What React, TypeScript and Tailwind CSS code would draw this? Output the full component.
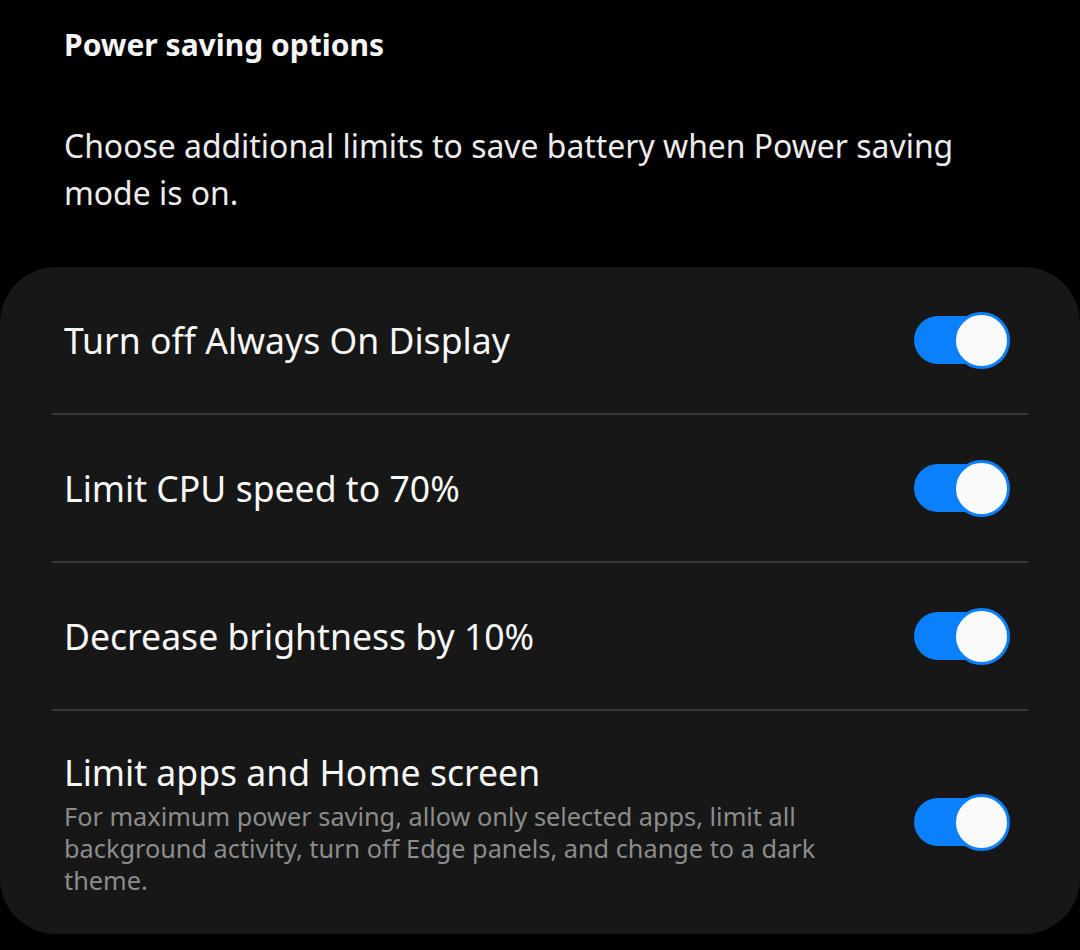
import React from "react";

type Option = { title: string; detail?: string };

const options: Option[] = [
  { title: "Turn off Always On Display" },
  { title: "Limit CPU speed to 70%" },
  { title: "Decrease brightness by 10%" },
  {
    title: "Limit apps and Home screen",
    detail:
      "For maximum power saving, allow only selected apps, limit all background activity, turn off Edge panels, and change to a dark theme.",
  },
];

function Toggle() {
  return (
    <div className="relative h-[57px] w-[96px] shrink-0">
      <div className="absolute left-0 top-[4px] h-[48px] w-[80px] rounded-full bg-[#0b80fc]" />
      <div className="absolute right-0 top-0 h-[57px] w-[57px] rounded-full border-[3px] border-[#0b80fc] bg-[#fafafa]" />
    </div>
  );
}

export default function App() {
  return (
    <div
      className="h-[950px] w-[1080px] overflow-hidden bg-black text-white"
      style={{ fontFamily: '"Noto Sans", "Open Sans", sans-serif' }}
    >
      <div className="px-[64px] pt-[25px]">
        <h1 className="text-[30px] font-bold leading-[40px] text-[#f5f5f5]">
          Power saving options
        </h1>
        <p className="mt-[57px] text-[31.9px] leading-[47px] text-[#ececec]">
          Choose additional limits to save battery when Power saving mode is on.
        </p>
      </div>

      <div className="mt-[51px] rounded-[56px] bg-[#171717] pb-[38px]">
        {options.map((o, i) => (
          <div key={o.title}>
            {i > 0 && <div className="mx-[52px] h-[2px] bg-[#383838]" />}
            <div
              className={
                o.detail
                  ? "flex items-center justify-between pl-[64px] pr-[70px] pt-[38px]"
                  : "flex h-[146px] items-center justify-between pl-[64px] pr-[70px]"
              }
            >
              <div className="min-w-0 flex-1 pr-[80px]">
                <div className="text-[35.6px] leading-[46px] text-[#f7f7f7]">{o.title}</div>
                {o.detail && (
                  <div className="mt-[5px] text-[25.3px] leading-[32px] text-[#8c8c8c]">
                    {o.detail}
                  </div>
                )}
              </div>
              <Toggle />
            </div>
          </div>
        ))}
      </div>
    </div>
  );
}
